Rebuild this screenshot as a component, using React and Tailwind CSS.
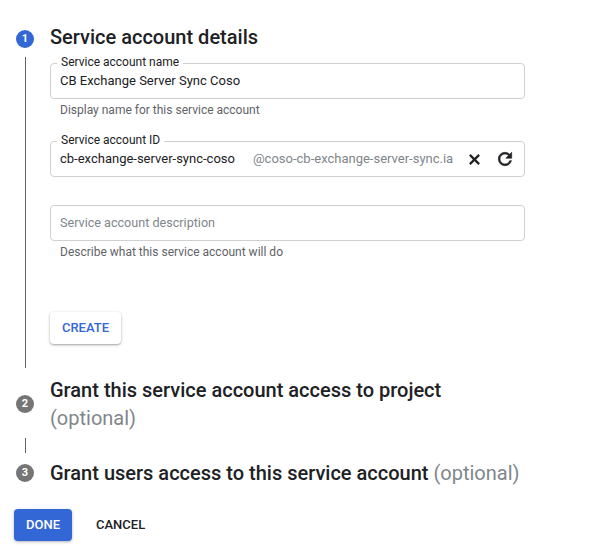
import React from "react";

const font = { fontFamily: "Roboto, 'Noto Sans', Arial, sans-serif" };

function Circle({ n, active }) {
  return (
    <div
      className={`w-[18px] h-[18px] rounded-full flex items-center justify-center text-[11px] font-bold text-white shrink-0 ${
        active ? "bg-[#3367d6]" : "bg-[#757575]"
      }`}
    >
      {n}
    </div>
  );
}

function OutlinedField({ label, children }) {
  return (
    <div className="relative h-[36px] border border-[#d0d0d0] rounded-[4px] flex items-center pl-[9px] pr-[12px] whitespace-nowrap">
      {label && (
        <span className="absolute left-[6px] top-[-9px] bg-white px-[4px] text-[12px] leading-[14px] text-[#202124]">
          {label}
        </span>
      )}
      {children}
    </div>
  );
}

export default function App() {
  return (
    <div className="w-[604px] h-[551px] bg-white relative overflow-hidden text-[#202124]" style={font}>
      {/* Step 1 */}
      <div className="flex pt-[23px]">
        <div className="w-[50px] flex flex-col items-center pt-[7px] shrink-0">
          <Circle n="1" active />
          <div className="w-px flex-1 bg-[#5f6368] mt-[9px]" />
        </div>
        <div className="w-[475px] pb-[24px]">
          <div className="text-[20px] leading-[28px] font-medium text-[#202124]">Service account details</div>
          <div className="mt-[12px]">
            <OutlinedField label="Service account name">
              <span className="text-[13px] text-[#202124]">CB Exchange Server Sync Coso</span>
            </OutlinedField>
            <div className="mt-[3px] pl-[10px] text-[12px] leading-[16px] text-[#5f6368]">
              Display name for this service account
            </div>
          </div>
          <div className="mt-[23px]">
            <OutlinedField label="Service account ID">
              <span className="text-[13px] text-[#202124] shrink-0">cb-exchange-server-sync-coso</span>
              <span className="ml-[18px] text-[13px] text-[#80868b] shrink-0">@coso-cb-exchange-server-sync.ia</span>
              <div className="flex-1" />
              <svg width="13" height="13" viewBox="0 0 14 14" className="mr-[14px] shrink-0">
                <path d="M2 2 L12 12 M12 2 L2 12" stroke="#202124" strokeWidth="2.4" strokeLinecap="butt" />
              </svg>
              <svg width="20" height="20" viewBox="0 0 24 24" className="shrink-0 mr-[-3px]">
                <path
                  d="M17.65 6.35A7.958 7.958 0 0 0 12 4c-4.42 0-7.99 3.58-7.99 8s3.57 8 7.99 8c3.73 0 6.84-2.55 7.73-6h-2.08A5.99 5.99 0 0 1 12 18c-3.31 0-6-2.69-6-6s2.690-6 6-6c1.66 0 3.14.69 4.22 1.78L13 11h7V4l-2.35 2.35z"
                  fill="#202124"
                  stroke="#202124"
                  strokeWidth="0.8"
                />
              </svg>
            </OutlinedField>
          </div>
          <div className="mt-[28px]">
            <OutlinedField>
              <span className="text-[12.6px] text-[#80868b]">Service account description</span>
            </OutlinedField>
            <div className="mt-[3px] pl-[10px] text-[12px] leading-[16px] text-[#5f6368]">
              Describe what this service account will do
            </div>
          </div>
          <div className="mt-[52px]">
            <button className="h-[32px] w-[71px] rounded-[4px] bg-white text-[#3367d6] text-[13px] font-medium shadow-[0_1px_3px_rgba(0,0,0,0.3),0_1px_1px_rgba(0,0,0,0.1)]">
              CREATE
            </button>
          </div>
        </div>
      </div>

      {/* Step 2 */}
      <div className="flex items-center mt-[8px]">
        <div className="w-[50px] flex justify-center shrink-0">
          <Circle n="2" />
        </div>
        <div className="text-[20px] leading-[28px] font-medium text-[#202124]">
          Grant this service account access to project
          <br />
          <span className="text-[#80868b] font-normal">(optional)</span>
        </div>
      </div>

      <div className="w-[50px] flex justify-center mt-[6px]">
        <div className="w-px h-[15px] bg-[#5f6368]" />
      </div>

      {/* Step 3 */}
      <div className="flex items-center mt-[6px]">
        <div className="w-[50px] flex justify-center shrink-0">
          <Circle n="3" />
        </div>
        <div className="text-[20px] leading-[28px] font-medium text-[#202124]">
          Grant users access to this service account{" "}
          <span className="text-[#80868b] font-normal">(optional)</span>
        </div>
      </div>

      {/* Buttons */}
      <div className="flex items-center pl-[14px] mt-[22px]">
        <button className="h-[32px] w-[58px] rounded-[4px] bg-[#3367d6] text-white text-[13px] font-medium shadow-[0_1px_3px_rgba(0,0,0,0.3)]">
          DONE
        </button>
        <button className="ml-[24px] text-[13px] font-medium text-[#202124]">CANCEL</button>
      </div>
    </div>
  );
}
